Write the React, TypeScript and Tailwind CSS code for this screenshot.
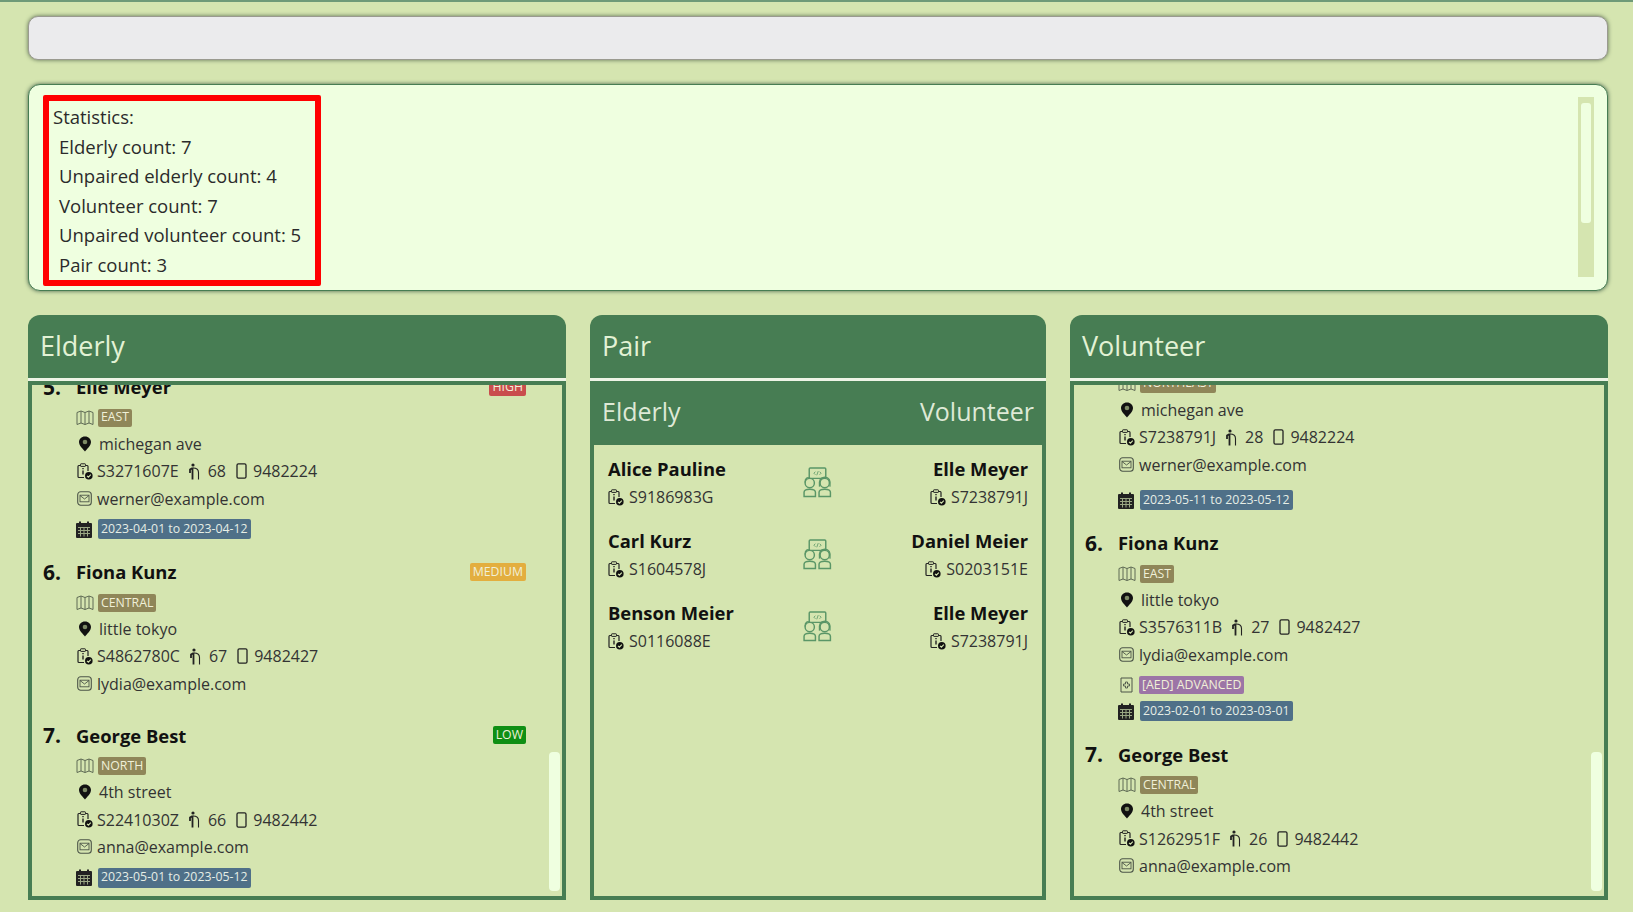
const font = { fontFamily: '"Open Sans", "Noto Sans", sans-serif' }

function MapIcon() {
  return (
    <svg width="18" height="16" viewBox="0 0 18 16" fill="none" stroke="#5f6b55" strokeWidth="1" className="shrink-0">
      <path d="M1 2.5 L5 1 L9 2.5 L13 1 L17 2.5 V14.5 L13 13 L9 14.5 L5 13 L1 14.5 Z" />
      <path d="M5 1 V13 M9 2.5 V14.5 M13 1 V13" />
    </svg>
  )
}

function PinIcon() {
  return (
    <svg width="14" height="16" viewBox="0 0 14 16" className="shrink-0">
      <path d="M7 0.5 C3.4 0.5 1 3 1 6 C1 9.6 5 13 7 15.5 C9 13 13 9.6 13 6 C13 3 10.6 0.5 7 0.5 Z" fill="#111" />
      <circle cx="7" cy="6" r="2.3" fill="#7d8a66" />
    </svg>
  )
}

function IdIcon() {
  return (
    <svg width="16" height="17" viewBox="0 0 16 17" fill="none" className="shrink-0">
      <path d="M3.500 2.500 H1.800 C1.200 2.500 1 2.900 1 3.400 V13.500 C1 14.200 1.300 14.500 2 14.500 H7 M8.500 2.500 H10.200 C10.800 2.500 11 2.900 11 3.400 V8" stroke="#222" strokeWidth="1.200" />
      <rect x="3.500" y="0.800" width="5" height="2.600" rx="0.600" stroke="#222" strokeWidth="1" />
      <path d="M6 5 V6.300 M6 7.500 V11.500" stroke="#222" strokeWidth="1.400" />
      <circle cx="11.800" cy="12.800" r="3.800" fill="#111" />
      <path d="M10 12.800 L11.400 14.200 L13.800 11.600" stroke="#d5e5b0" strokeWidth="1.100" />
    </svg>
  )
}

function WalkerIcon() {
  return (
    <svg width="12" height="17" viewBox="0 0 12 17" fill="none" className="shrink-0">
      <circle cx="5" cy="2" r="1.6" fill="#222" />
      <path d="M4.500 4.500 V16.500 M4.500 5 L2 6.500 V10" stroke="#222" strokeWidth="1.800" />
      <path d="M5 5 C8 5 10.500 6.500 10.500 9.500 V16.500" stroke="#222" strokeWidth="1.100" />
    </svg>
  )
}

function PhoneIcon() {
  return (
    <svg width="11" height="16" viewBox="0 0 11 16" fill="none" className="shrink-0">
      <rect x="1" y="0.800" width="9" height="14.400" rx="1.400" stroke="#222" strokeWidth="1.300" />
    </svg>
  )
}

function MailIcon() {
  return (
    <svg width="15" height="15" viewBox="0 0 15 15" fill="none" stroke="#4c5548" className="shrink-0">
      <rect x="0.700" y="0.700" width="13.600" height="13.600" rx="3" strokeWidth="1.100" />
      <rect x="3" y="4.200" width="9" height="6.600" strokeWidth="0.900" />
      <path d="M3 4.500 L7.500 8 L12 4.500" strokeWidth="0.900" />
    </svg>
  )
}

function CalendarIcon() {
  return (
    <svg width="16" height="17" viewBox="0 0 16 17" className="shrink-0">
      <rect x="0" y="2" width="16" height="15" rx="1" fill="#222" />
      <rect x="3" y="0.500" width="2" height="3" fill="#222" />
      <rect x="11" y="0.500" width="2" height="3" fill="#222" />
      <path d="M2 6.500 H14 M2 9.500 H14 M2 12.500 H14 M4.500 6 V15.500 M8 6 V15.500 M11.500 6 V15.500" stroke="#9aa783" strokeWidth="1" />
    </svg>
  )
}

function AedIcon() {
  return (
    <svg width="14" height="16" viewBox="0 0 14 16" fill="none" stroke="#4c5548" className="shrink-0">
      <path d="M2 1 H13 V15 H2 M2 1 V15" strokeWidth="1" />
      <path d="M6.500 5 H8.500 V7 H10.500 V9 H8.500 V11 H6.500 V9 H4.500 V7 H6.500 Z" strokeWidth="0.900" />
    </svg>
  )
}

function PairIcon() {
  return (
    <svg width="31" height="31" viewBox="0 0 30 30" fill="none" stroke="#5a9667" strokeWidth="1.400" className="shrink-0">
      <rect x="7" y="1" width="16" height="10" rx="1" />
      <path d="M13 4.500 L11.500 6 L13 7.500 M17 4.500 L18.500 6 L17 7.500 M15.700 4 L14.300 8" strokeWidth="0.800" />
      <circle cx="7.500" cy="15.500" r="4.500" />
      <path d="M3 15 C3 10 6 10 7 11 M2 28.500 V24.500 C2 22 4 21.500 7.500 21.500 C11 21.500 13 22 13 24.500 V28.500 Z" />
      <circle cx="22" cy="15.500" r="4.500" />
      <path d="M17 19 C16 13 18 10 22 10 C26 10 28 13 27 19 M16.500 28.500 V24.500 C16.500 22 18.500 21.500 22 21.500 C25.500 21.500 27.500 22 27.500 24.500 V28.500 Z" />
    </svg>
  )
}

function Tag({ text, color }: { text: string; color: string }) {
  return (
    <span className={`inline-flex h-[18px] items-center rounded-[2px] px-[3px] text-[12.300px] leading-none text-[#f0f0d8] ${color}`}>
      {text}
    </span>
  )
}

type Person = {
  index: number
  name: string
  region: string
  address: string
  nric: string
  age: number
  phone: string
  email: string
  risk?: { text: string; color: string }
  aed?: string
  dates?: string
  wideGap?: boolean
}

const elderly: Person[] = [
  { index: 5, name: 'Elle Meyer', region: 'EAST', address: 'michegan ave', nric: 'S3271607E', age: 68, phone: '9482224', email: 'werner@example.com', risk: { text: 'HIGH', color: 'bg-[#c94d4d]' }, dates: '2023-04-01 to 2023-04-12' },
  { index: 6, name: 'Fiona Kunz', region: 'CENTRAL', address: 'little tokyo', nric: 'S4862780C', age: 67, phone: '9482427', email: 'lydia@example.com', risk: { text: 'MEDIUM', color: 'bg-[#e3ae3f]' } },
  { index: 7, name: 'George Best', region: 'NORTH', address: '4th street', nric: 'S2241030Z', age: 66, phone: '9482442', email: 'anna@example.com', risk: { text: 'LOW', color: 'bg-[#0f8f14]' }, dates: '2023-05-01 to 2023-05-12' },
]

const volunteers: Person[] = [
  { index: 5, name: 'Elle Meyer', region: 'NORTHEAST', address: 'michegan ave', nric: 'S7238791J', age: 28, phone: '9482224', email: 'werner@example.com', dates: '2023-05-11 to 2023-05-12', wideGap: true },
  { index: 6, name: 'Fiona Kunz', region: 'EAST', address: 'little tokyo', nric: 'S3576311B', age: 27, phone: '9482427', email: 'lydia@example.com', aed: '[AED] ADVANCED', dates: '2023-02-01 to 2023-03-01' },
  { index: 7, name: 'George Best', region: 'CENTRAL', address: '4th street', nric: 'S1262951F', age: 26, phone: '9482442', email: 'anna@example.com' },
]

const pairs = [
  { elderly: 'Alice Pauline', elderlyNric: 'S9186983G', volunteer: 'Elle Meyer', volunteerNric: 'S7238791J' },
  { elderly: 'Carl Kurz', elderlyNric: 'S1604578J', volunteer: 'Daniel Meier', volunteerNric: 'S0203151E' },
  { elderly: 'Benson Meier', elderlyNric: 'S0116088E', volunteer: 'Elle Meyer', volunteerNric: 'S7238791J' },
]

function PersonCard({ p }: { p: Person }) {
  const hasExtras = p.aed || p.dates
  return (
    <div className={`flex pl-[11px] pr-[36px] ${hasExtras ? 'pb-[18px]' : 'pb-[23px]'}`}>
      <div className="w-[33px] shrink-0 text-[21px] font-bold leading-[30px] text-[#111]">{p.index}.</div>
      <div className="min-w-0 flex-1">
        <div className="flex h-[31px] items-center justify-between pb-[1px]">
          <span className="text-[18.400px] font-bold text-[#111]">{p.name}</span>
          {p.risk && <Tag text={p.risk.text} color={p.risk.color} />}
        </div>
        <div className="flex h-[27.300px] items-center gap-[4px] pt-[2px]">
          <MapIcon />
          <Tag text={p.region} color="bg-[#8f8659]" />
        </div>
        <div className="flex h-[27.300px] items-center gap-[7px] pl-[2px] text-[16px] text-[#333]">
          <PinIcon />
          <span>{p.address}</span>
        </div>
        <div className="flex h-[27.300px] items-center text-[16px] text-[#333]">
          <span className="flex w-[21px] justify-start pl-[1px]"><IdIcon /></span>
          <span>{p.nric}</span>
          <span className="ml-[9px] mr-[8px]"><WalkerIcon /></span>
          <span>{p.age}</span>
          <span className="ml-[10px] mr-[6px]"><PhoneIcon /></span>
          <span>{p.phone}</span>
        </div>
        <div className="flex h-[27.300px] items-center gap-[5px] pl-[1px] text-[16px] text-[#333]">
          <MailIcon />
          <span>{p.email}</span>
        </div>
        {hasExtras && (
          <div className={`flex flex-col gap-[6px] ${p.wideGap ? 'mt-[12px]' : 'mt-[7px]'}`}>
            {p.aed && (
              <div className="flex h-[20px] items-center gap-[6px] pl-[1px]">
                <AedIcon />
                <Tag text={p.aed} color="bg-[#9c75a6]" />
              </div>
            )}
            {p.dates && (
              <div className="flex h-[20px] items-center gap-[6px]">
                <CalendarIcon />
                <span className="inline-flex h-[20px] items-center rounded-[2px] bg-[#4f7088] px-[3px] text-[12.300px] leading-none text-[#e6eee6]">
                  {p.dates}
                </span>
              </div>
            )}
          </div>
        )}
      </div>
    </div>
  )
}

function PersonColumn({ title, people, offset }: { title: string; people: Person[]; offset: string }) {
  return (
    <section className="flex w-[538px] flex-col">
      <h2 className="flex h-[63px] items-center rounded-t-[12px] bg-[#477d53] pl-[12px] text-[27px] font-normal text-[#e3f2d5]">{title}</h2>
      <div className="h-[3px] bg-[#eef4e6]" />
      <div className="relative min-h-0 flex-1 overflow-hidden border-[4px] border-[#477d53]">
        <div className={offset}>
          {people.map((p) => (
            <PersonCard key={p.index} p={p} />
          ))}
        </div>
        <div className="absolute bottom-[5px] right-[2px] h-[139px] w-[11px] rounded-[4px] bg-[#efffe0]" />
      </div>
    </section>
  )
}

function PairColumn() {
  return (
    <section className="flex w-[456px] flex-col">
      <h2 className="flex h-[63px] items-center rounded-t-[12px] bg-[#477d53] pl-[12px] text-[27px] font-normal text-[#e3f2d5]">Pair</h2>
      <div className="h-[3px] bg-[#eef4e6]" />
      <div className="flex h-[64px] items-center justify-between bg-[#477d53] px-[12px] pb-[3px] text-[25px] text-[#dfe9d6]">
        <span>Elderly</span>
        <span>Volunteer</span>
      </div>
      <div className="min-h-0 flex-1 border-[4px] border-t-0 border-[#477d53] pt-[2px]">
        {pairs.map((row) => (
          <div key={row.elderly} className="flex h-[72px] items-center pl-[14px] pr-[14px]">
            <div className="w-[175px]">
              <div className="text-[18.400px] font-bold leading-[27px] text-[#111]">{row.elderly}</div>
              <div className="mt-[2px] flex items-center gap-[5px] text-[16px] leading-[27px] text-[#333]"><IdIcon />{row.elderlyNric}</div>
            </div>
            <div className="flex flex-1 justify-start pb-[1px] pl-[19px]"><PairIcon /></div>
            <div className="w-[175px] text-right">
              <div className="text-[18.400px] font-bold leading-[27px] text-[#111]">{row.volunteer}</div>
              <div className="mt-[2px] flex items-center justify-end gap-[5px] text-[16px] leading-[27px] text-[#333]"><IdIcon />{row.volunteerNric}</div>
            </div>
          </div>
        ))}
      </div>
    </section>
  )
}

export default function App() {
  return (
    <div style={font} className="flex h-screen w-full flex-col overflow-hidden border-t-[2px] border-[#6f9a78] bg-[#d5e5b0] pb-[12px] pl-[28px] pr-[25px] pt-[14px]">
      <div className="h-[44px] shrink-0 rounded-[10px] border border-[#9a9a90] bg-[#ebebed] shadow-[0_0_4px_#5a6b50]" />
      <div className="mt-[24px] flex h-[207px] shrink-0 items-start justify-between rounded-[12px] border border-[#477d53] bg-[#efffe0] pl-[14px] pr-[13px] pt-[10px] shadow-[0_0_4px_#44604a]">
        <div className="h-[191px] w-[278px] rounded-[2px] border-[6px] border-[#ff0000] pl-[4px] pt-[1px] text-[18.500px] leading-[29.600px] text-[#2b2b2b]">
          <div>Statistics:</div>
          <div className="pl-[6px]">Elderly count: 7</div>
          <div className="pl-[6px]">Unpaired elderly count: 4</div>
          <div className="pl-[6px]">Volunteer count: 7</div>
          <div className="pl-[6px]">Unpaired volunteer count: 5</div>
          <div className="pl-[6px]">Pair count: 3</div>
        </div>
        <div className="mt-[2px] h-[180px] w-[16px] bg-[#d5e5b0] px-[3px] pt-[6px]">
          <div className="h-[120px] w-[10px] rounded-[3px] bg-[#efffe0]" />
        </div>
      </div>
      <div className="mt-[24px] flex min-h-0 flex-1 gap-[24px]">
        <PersonColumn title="Elderly" people={elderly} offset="-mt-[13px]" />
        <PairColumn />
        <PersonColumn title="Volunteer" people={volunteers} offset="-mt-[47px]" />
      </div>
    </div>
  )
}
